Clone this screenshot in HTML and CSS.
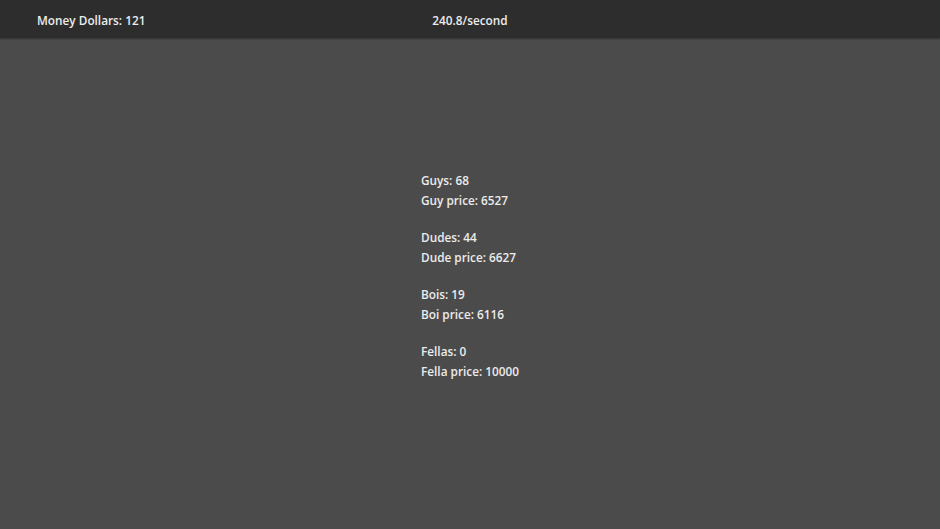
FILE: index.html
```html
<!DOCTYPE html>
<html>
<head>
<meta charset="utf-8">
<link rel="stylesheet" href="styles.css">
</head>
<body>
<header class="topbar">
  <div class="money">Money Dollars: 121</div>
  <div class="rate">240.8/second</div>
  <div class="spacer"></div>
</header>
<main class="main">
  <div class="stats">
    <div class="group"><div>Guys: 68</div><div>Guy price: 6527</div></div>
    <div class="group"><div>Dudes: 44</div><div>Dude price: 6627</div></div>
    <div class="group"><div>Bois: 19</div><div>Boi price: 6116</div></div>
    <div class="group"><div>Fellas: 0</div><div>Fella price: 10000</div></div>
  </div>
</main>
</body>
</html>
```
FILE: styles.css
```css
html, body {
  margin: 0;
  padding: 0;
  height: 100%;
}
body {
  background: #4b4b4b;
  color: #ececec;
  font-family: "Open Sans", "Noto Sans", sans-serif;
  font-weight: 600;
  font-size: 11.8px;
  line-height: 20px;
}
.topbar {
  box-sizing: border-box;
  height: 38px;
  background: #2d2d2d;
  display: grid;
  grid-template-columns: 1fr auto 1fr;
  align-items: center;
  padding: 2px 37px 0;
  box-shadow: 0 1px 2px rgba(0,0,0,0.35);
}
.main {
  display: flex;
  justify-content: center;
  padding-top: 132px;
}
.stats {
  width: fit-content;
}
.group {
  margin-bottom: 17px;
}
```
